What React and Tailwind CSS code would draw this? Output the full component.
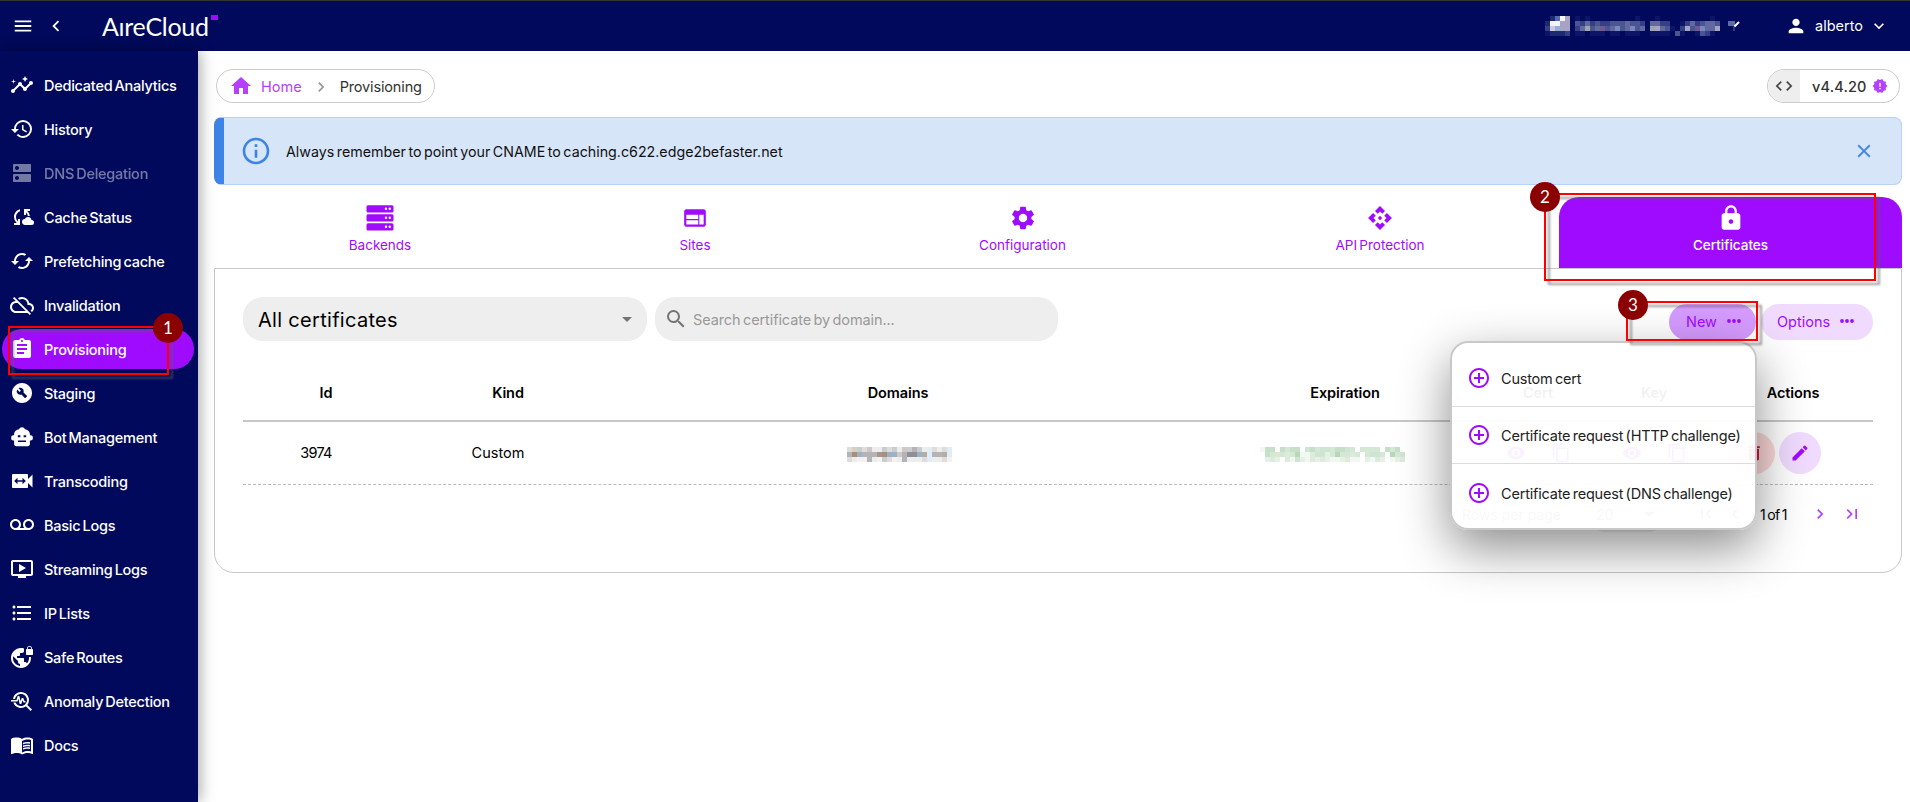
import React from 'react';
import {
  MdInsights, MdHistory, MdDns, MdCloudSync, MdCached, MdCloudOff, MdAssignment, MdBuildCircle,
  MdVoicemail, MdOndemandVideo, MdFormatListBulleted, MdVpnLock, MdTroubleshoot, MdMenuBook,
  MdMenu, MdChevronLeft, MdChevronRight, MdKeyboardArrowDown, MdPerson, MdHome, MdCode, MdNewReleases,
  MdInfoOutline, MdClose, MdWeb, MdSettings, MdApi, MdLock, MdArrowDropDown, MdSearch, MdMoreHoriz,
  MdAddCircleOutline, MdVisibility, MdContentCopy, MdDelete, MdEdit, MdFirstPage, MdLastPage,
} from 'react-icons/md';

const BotIcon = ({ className }) => (
  <svg viewBox="0 0 24 24" className={className} fill="currentColor">
    <path fillRule="evenodd" d="M12 2.200c1.400 0 2.500.8 3 2 2.600.2 4.600 2 4.900 4.500v1.500h.9c1.100 0 2 .9 2 2v1.300c0 1.100-.9 2-2 2h-.9V19c0 1.300-.9 2.200-2.200 2.200H6.300c-1.300 0-2.200-.9-2.200-2.200v-3.500h-.9c-1.100 0-2-.9-2-2v-1.300c0-1.100.9-2 2-2h.9V8.700c.3-2.500 2.300-4.300 4.900-4.500.5-1.200 1.600-2 3-2zM7.800 10.300v2h2.600v-2zM13.600 10.300v2h2.600v-2zM8 15.500v1.500h8v-1.500z" />
  </svg>
);

const TranscodeIcon = ({ className }) => (
  <svg viewBox="0 0 24 24" className={className} fill="currentColor">
    <path fillRule="evenodd" d="M3 5h14c.6 0 1 .4 1 1v4l4.500-4.500v13L18 14v4c0 .6-.4 1-1 1H3c-.6 0-1-.4-1-1V6c0-.6.4-1 1-1zM7.500 8.800L4.200 12l3.300 3.200v-2.400h5v2.400l3.300-3.200-3.300-3.200v2.400h-5z" />
  </svg>
);

const ServerIcon = () => (
  <svg viewBox="0 0 28 26" className="h-[26px] w-7">
    {[0, 9, 18].map(y => (
      <g key={y}>
        <rect x="0.500" y={y + 0.300} width="27" height="7.200" rx="1.500" fill="#9f0bff" />
        <circle cx="20" cy={y + 3.800} r="1.200" fill="white" />
        <circle cx="23.800" cy={y + 3.800} r="1.200" fill="white" />
      </g>
    ))}
  </svg>
);

const DotsIcon = () => (
  <svg viewBox="0 0 14 4" className="mb-[3px] h-1 w-[14px]" fill="currentColor">
    <circle cx="2" cy="2" r="1.900" />
    <circle cx="7" cy="2" r="1.900" />
    <circle cx="12" cy="2" r="1.900" />
  </svg>
);

const menuItems = [
  { label: 'Dedicated Analytics', icon: MdInsights },
  { label: 'History', icon: MdHistory },
  { label: 'DNS Delegation', icon: MdDns, disabled: true },
  { label: 'Cache Status', icon: MdCloudSync },
  { label: 'Prefetching cache', icon: MdCached },
  { label: 'Invalidation', icon: MdCloudOff },
  { label: 'Provisioning', icon: MdAssignment, active: true },
  { label: 'Staging', icon: MdBuildCircle },
  { label: 'Bot Management', icon: BotIcon },
  { label: 'Transcoding', icon: TranscodeIcon },
  { label: 'Basic Logs', icon: MdVoicemail },
  { label: 'Streaming Logs', icon: MdOndemandVideo },
  { label: 'IP Lists', icon: MdFormatListBulleted },
  { label: 'Safe Routes', icon: MdVpnLock },
  { label: 'Anomaly Detection', icon: MdTroubleshoot },
  { label: 'Docs', icon: MdMenuBook },
];

const tabs = [
  { label: 'Backends', width: 'w-[332px]', icon: <ServerIcon /> },
  { label: 'Sites', width: 'w-[298px]', icon: <MdWeb className="size-[26px]" /> },
  { label: 'Configuration', width: 'w-[357px]', icon: <MdSettings className="size-7" /> },
  { label: 'API Protection', width: 'w-[358px]', icon: <MdApi className="size-[26px]" /> },
  { label: 'Certificates', width: 'w-[343px]', icon: <MdLock className="size-7" />, active: true },
];

// Censored values: one letter per 5px cell, '.' is empty
const accountMosaic = {
  colors: { a: '#1c2a72', b: '#5b6aa8', c: '#f2f4fb', d: '#a8a3c4', e: '#343f86', f: '#4b5591', g: '#6468a0', h: '#9fa4b4', i: '#7688bd', j: '#755592', k: '#0d1568', l: '#cfc6d8', m: '#8fb1d6' },
  rows: [
    '.abcd.k.k.........k...k..........k.',
    'accdd.fegefeefffgffe.ggee..kegefggf',
    'elmdd.eghfgjfgifgifg.hdgfk.edfjiggd',
    'kaaae.kk.kkk.kk.kkk..kkkk.fk..kfek.',
  ],
};
const domainMosaic = {
  colors: { a: '#dedddc', b: '#d9cec2', c: '#c9cdd0', d: '#eceded', e: '#a89078', f: '#9bb1c4', g: '#b4b4b8', h: '#a89490', i: '#8f9097', j: '#e0edf9', k: '#cfc8c6', l: '#f6f1ee', m: '#b5aca2' },
  rows: [
    'abcakddcacdkcgcdjadaj',
    'gefgggheffkgiifmjggmj',
    'adllgdlcaldgdddajddal',
  ],
};
const expirationMosaic = {
  colors: { a: '#c6dfc9', b: '#d5e8d5', c: '#e4f1e4', d: '#f1f8f1', e: '#b4d8b8', f: '#dcebdc', g: '#cfe5d4', h: '#dde7cd' },
  rows: [
    'daa.abaa.gabggbaagb.bbbb.aba.',
    '.abhbfbeddfggcbebbfb.bggb.ebg',
    '.cfc.fdgcdfcfcddcfdd.cdfc.dcf',
  ],
};

const Mosaic = ({ data }) => (
  <div className="flex flex-col">
    {data.rows.map((row, r) => (
      <div key={r} className="flex">
        {row.split('').map((c, i) => (
          <div key={i} className="size-[5px]" style={{ backgroundColor: data.colors[c] }} />
        ))}
      </div>
    ))}
  </div>
);

const StepFrame = ({ className }) => (
  <div className={`pointer-events-none absolute z-30 border-2 border-[#ff0000] drop-shadow-[4px_4px_1px_rgba(90,90,90,0.6)] ${className}`} />
);

const StepBadge = ({ n, className }) => (
  <div className={`absolute z-40 flex size-[30px] items-center justify-center rounded-full bg-[#8b0000] font-['Lato'] text-[17px] text-white ${className}`}>{n}</div>
);

const Header = () => (
  <header className="flex h-[51px] shrink-0 items-center border-t border-[#333] bg-[#00095b] text-white">
    <MdMenu className="ml-[12px] size-[22px]" />
    <MdChevronLeft className="ml-[11px] size-[22px]" />
    <div className="ml-[35px] flex items-start font-['Lato']">
      <span className="text-[25px] leading-[26px] tracking-[-0.300px]">AıreCloud</span>
      <span className="mt-[2px] ml-[2px] h-[5px] w-[7px] bg-[#9f0bff]" />
    </div>
    <div className="ml-auto flex items-center">
      <Mosaic data={accountMosaic} />
      <svg viewBox="0 0 14 12" className="ml-2 h-3 w-[14px]">
        <rect x="0" y="1" width="7" height="5" fill="#5b6aa8" />
        <rect x="5" y="6" width="2" height="5" fill="#2c387c" />
        <path d="M6.500 6.500L11 2" stroke="white" strokeWidth="2" />
      </svg>
      <MdPerson className="ml-[43px] size-[22px]" />
      <span className="ml-[8px] text-[14.500px]">alberto</span>
      <MdKeyboardArrowDown className="mr-[21px] ml-[6px] size-[20px]" />
    </div>
  </header>
);

const Sidebar = () => (
  <nav className="relative z-10 flex w-[198px] shrink-0 flex-col gap-1 bg-[#00095b] pt-[14px] pr-1 pl-[2px] shadow-[2px_0_14px_rgba(0,0,0,0.35)]">
    {menuItems.map(item => {
      const Icon = item.icon;
      return (
        <div
          key={item.label}
          className={`flex h-10 shrink-0 items-center rounded-full pl-2 text-white ${item.active ? 'bg-[#9f0bff]' : ''} ${item.disabled ? 'opacity-45' : ''}`}
        >
          <Icon className="mb-px size-6" />
          <span className="ml-[10px] pt-px text-[14.500px] font-medium tracking-[-0.250px] whitespace-nowrap [word-spacing:-1.500px]">{item.label}</span>
        </div>
      );
    })}
    <StepFrame className="top-[275px] left-[8px] h-[49px] w-[161px]" />
    <StepBadge n={1} className="top-[262px] left-[153px]" />
  </nav>
);

const NewMenu = () => (
  <div className="absolute top-[72px] left-[1235px] z-20 w-[307px] rounded-[18px] border-2 border-[#c8c8c8] bg-white/95 py-[7px] shadow-[0_18px_50px_rgba(0,0,0,0.45)]">
    {['Custom cert', 'Certificate request (HTTP challenge)', 'Certificate request (DNS challenge)'].map((label, i) => (
      <div key={label} className={`flex h-[57px] items-center pl-[15px] ${i < 2 ? 'border-b border-[#dcdcdf]' : ''}`}>
        <MdAddCircleOutline className="size-6 text-[#9f0bff]" />
        <span className="ml-[10px] pt-[2px] text-[14.500px] tracking-[-0.200px] whitespace-nowrap text-[#222] [word-spacing:-1.500px]">{label}</span>
      </div>
    ))}
  </div>
);

const CertificatesPanel = () => (
  <section className="relative h-[305px] rounded-b-[20px] border border-[#c8c8c8] px-[28px] pt-[28px]">
    <div className="flex items-start">
      <div className="flex h-11 w-[404px] items-center justify-between rounded-[20px] bg-[#eee] pr-2 pl-[15px]">
        <span className="pt-px text-[20px] tracking-[0.300px] text-black">All certificates</span>
        <MdArrowDropDown className="size-6 text-[#757575]" />
      </div>
      <div className="ml-2 flex h-11 w-[403px] items-center rounded-[20px] bg-[#eee] pl-[9px]">
        <MdSearch className="size-6 text-[#757575]" />
        <span className="ml-[5px] pt-px text-[14.500px] tracking-[-0.100px] text-[#999] [word-spacing:-1.500px]">Search certificate by domain...</span>
      </div>
      <div className="mt-[7px] ml-auto flex gap-[5px] text-[14.500px] text-[#9f0bff]">
        <button className="flex h-9 w-[87px] items-center gap-[10px] rounded-full bg-[#d59bff] pl-[17px]">
          New<DotsIcon />
        </button>
        <button className="flex h-9 w-[112px] items-center gap-[10px] rounded-full bg-[#f0dbff] pl-4">
          Options<DotsIcon />
        </button>
      </div>
    </div>

    <div className="mt-[26px] flex h-[55px] items-center border-b-2 border-[#c8c8c8] pb-[2px] text-[14.500px] font-semibold tracking-[-0.100px] text-black">
      <span className="w-[166px] text-center">Id</span>
      <span className="w-[198px] text-center">Kind</span>
      <span className="w-[582px] text-center">Domains</span>
      <span className="w-[312px] text-center">Expiration</span>
      <span className="w-[74px] text-center">Cert</span>
      <span className="w-[158px] text-center">Key</span>
      <span className="w-[120px] text-center">Actions</span>
    </div>

    {/* Row */}
    <div className="flex h-[63px] items-center border-b border-dashed border-[#bbb] text-[14.500px] text-black">
      <span className="w-[146px] text-center tracking-[-0.700px]">3974</span>
      <span className="w-[218px] text-center">Custom</span>
      <div className="ml-[240px] w-[413px] pt-[3px]"><Mosaic data={domainMosaic} /></div>
      <div className="w-[238px] pt-[3px]"><Mosaic data={expirationMosaic} /></div>
      <div className="flex items-center text-[#9f0bff]">
        <MdVisibility className="ml-[8px] size-5" />
        <MdContentCopy className="ml-[25px] size-5" />
        <MdVisibility className="ml-[51px] size-5" />
        <MdContentCopy className="ml-[25px] size-5" />
      </div>
      <div className="ml-auto flex gap-1 pr-[52px]">
        <span className="flex size-[42px] items-center justify-center rounded-full bg-[#fdd9d9] text-[#d8123f]"><MdDelete className="size-5" /></span>
        <span className="flex size-[42px] items-center justify-center rounded-full bg-[#f0dbff] text-[#9f0bff]"><MdEdit className="size-5" /></span>
      </div>
    </div>

    {/* Pagination */}
    <div className="mt-[11px] flex h-9 items-center justify-end text-[14px] text-black">
      <span className="text-[#777]">Rows per page</span>
      <span className="ml-7 flex h-9 w-[76px] items-center justify-between rounded-[16px] bg-[#eee] pl-[7px] text-[#777]">20<MdArrowDropDown className="mr-1 size-6" /></span>
      <MdFirstPage className="ml-[31px] size-5 text-[#b43fff]" />
      <MdChevronLeft className="ml-[9px] size-5 text-[#b43fff]" />
      <span className="ml-[15px] w-[31px] tracking-[-0.500px] whitespace-nowrap [word-spacing:-1.500px]">1 of 1</span>
      <MdChevronRight className="ml-[19px] size-5 text-[#b43fff]" />
      <MdLastPage className="mr-[11px] ml-[12px] size-5 text-[#b43fff]" />
    </div>

    <NewMenu />
    <StepFrame className="top-[32px] left-[1411px] h-[40px] w-[132px]" />
    <StepBadge n={3} className="top-[21px] left-[1403px]" />
  </section>
);

const App = () => (
  <div className="flex h-[802px] w-[1910px] flex-col overflow-hidden bg-white font-['Inter',sans-serif]">
    <Header />
    <div className="flex min-h-0 flex-1">
      <Sidebar />
      <main className="w-[1704px] pt-[18px] pl-4">
        <div className="flex h-[34px] items-center justify-between pr-[2px] pl-[2px]">
          <div className="flex h-[34px] w-[219px] items-center rounded-full border border-[#ccc] pl-[12px] text-[14.500px] whitespace-nowrap">
            <MdHome className="size-6 text-[#b43fff]" />
            <span className="ml-[8px] pt-[2px] text-[#b43fff]">Home</span>
            <MdChevronRight className="mx-[9px] mt-[2px] size-5 text-[#999]" />
            <span className="pt-[2px] tracking-[-0.150px] text-[#333]">Provisioning</span>
          </div>
          <div className="flex h-[34px] w-[133px] items-center overflow-hidden rounded-full border border-[#ccc]">
            <span className="flex h-full w-[32px] items-center justify-center bg-[#eee]"><MdCode className="size-5 text-[#444]" /></span>
            <span className="ml-[12px] pt-px text-[14.500px] font-medium tracking-[0.150px] text-[#333]">v4.4.20</span>
            <MdNewReleases className="ml-[5px] size-4 text-[#b43fff]" />
          </div>
        </div>

        <div className="mt-[14px] flex h-[68px] items-center rounded-[8px] border border-l-[10px] border-[#b8d1f7] border-l-[#3d84e6] bg-[#d7e5f9]">
          <MdInfoOutline className="ml-4 size-8 text-[#3d84e6]" />
          <span className="ml-[14px] pt-px text-[14.250px] text-[#111] [word-spacing:-1.500px]">Always remember to point your CNAME to caching.c622.edge2befaster.net</span>
          <MdClose className="mr-[26px] ml-auto size-[22px] text-[#3d84e6]" />
        </div>

        {/* Tabs */}
        <div className="relative mt-3 flex h-[71px] text-[13.500px]">
          {tabs.map(tab => (
            <div
              key={tab.label}
              className={`flex shrink-0 flex-col items-center pt-[7px] ${tab.width} ${tab.active ? 'rounded-t-[20px] bg-[#9f0bff] font-medium text-white' : 'text-[#9f0bff]'}`}
            >
              <span className="flex h-7 items-center">{tab.icon}</span>
              <span className="mt-[3px] [word-spacing:-1.500px]">{tab.label}</span>
            </div>
          ))}
          <StepFrame className="-top-[4px] left-[1330px] h-[88px] w-[332px]" />
          <StepBadge n={2} className="-top-[15px] left-[1316px]" />
        </div>

        <CertificatesPanel />
      </main>
    </div>
  </div>
);

export default App;
